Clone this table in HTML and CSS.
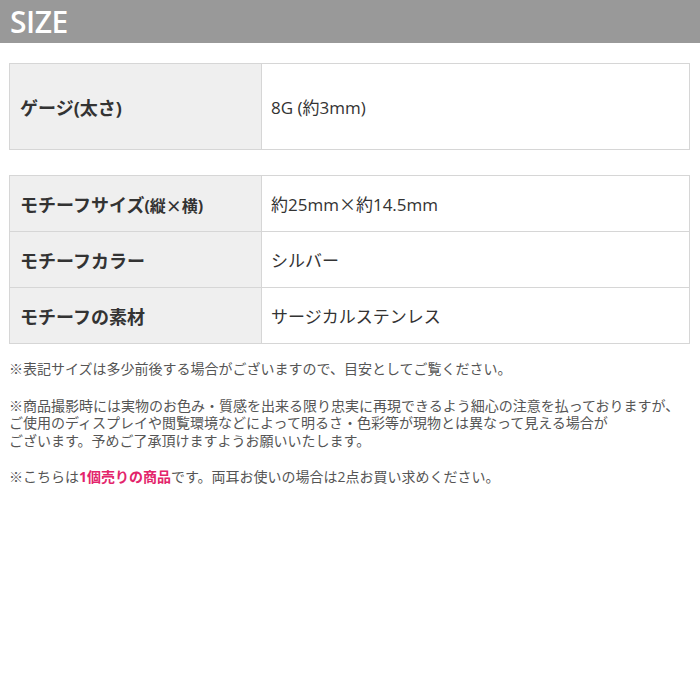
FILE: index.html
```html
<!DOCTYPE html>
<html lang="ja">
  <head>
    <meta charset="UTF-8" />
    <meta name="viewport" content="width=device-width, initial-scale=1.0" />
    <title>SIZE</title>
    <link rel="stylesheet" href="styles.css">
  </head>
  <body>
    <h1 class="title">SIZE</h1>
    <div class="content">
      <table class="spec gauge">
        <tr>
          <th>ゲージ(太さ)</th>
          <td>8G (約3mm)</td>
        </tr>
      </table>
      <table class="spec">
        <tr>
          <th>モチーフサイズ<span class="small">(縦<span class="jp">×</span>横)</span></th>
          <td>約25mm<span class="jp">×</span>約14.5mm</td>
        </tr>
        <tr>
          <th>モチーフカラー</th>
          <td>シルバー</td>
        </tr>
        <tr>
          <th>モチーフの素材</th>
          <td>サージカルステンレス</td>
        </tr>
      </table>
      <div class="notes">
        <p>※表記サイズは多少前後する場合がございますので、目安としてご覧ください。</p>
        <p>※商品撮影時には実物のお色み・質感を出来る限り忠実に再現できるよう細心の注意を払っておりますが、<br>ご使用のディスプレイや閲覧環境などによって明るさ・色彩等が現物とは異なって見える場合が<br>ございます。予めご了承頂けますようお願いいたします。</p>
        <p>※こちらは<strong class="accent">1個売りの商品</strong>です。両耳お使いの場合は2点お買い求めください。</p>
      </div>
    </div>
  </body>
</html>
```

FILE: styles.css
```css
body {
  margin: 0;
  padding: 0;
  background: #fff;
  font-family: "Open Sans", "Noto Sans CJK JP", sans-serif;
  color: #333;
}
.title {
  margin: 0;
  height: 43px;
  padding: 0 10px;
  background-color: #999;
  color: #fff;
  font-size: 30px;
  font-weight: 600;
  line-height: 43px;
  letter-spacing: -0.5px;
}
.content {
  padding: 20px 10px 0 9px;
}
.spec {
  width: 100%;
  border-collapse: collapse;
  font-size: 17px;
}
.gauge {
  margin-bottom: 25px;
}
.spec th,
.spec td {
  border: 1px solid #d6d6d6;
  height: 55px;
  padding: 0 10px;
  text-align: left;
  vertical-align: middle;
}
.spec th {
  width: 231px;
  background-color: #efefef;
  font-size: 18px;
  font-weight: bold;
  color: #333;
}
.spec td {
  padding-left: 9px;
  font-weight: normal;
}
.gauge th,
.gauge td {
  height: 85px;
}
.small {
  font-size: 16px;
}
.jp {
  font-family: "Noto Sans CJK JP", sans-serif;
}
.notes {
  margin-top: 16px;
  font-size: 14px;
  line-height: 17.5px;
  color: #555;
}
.notes p {
  margin: 0 0 19px;
}
.accent {
  color: #e3246b;
  font-weight: bold;
}
```
